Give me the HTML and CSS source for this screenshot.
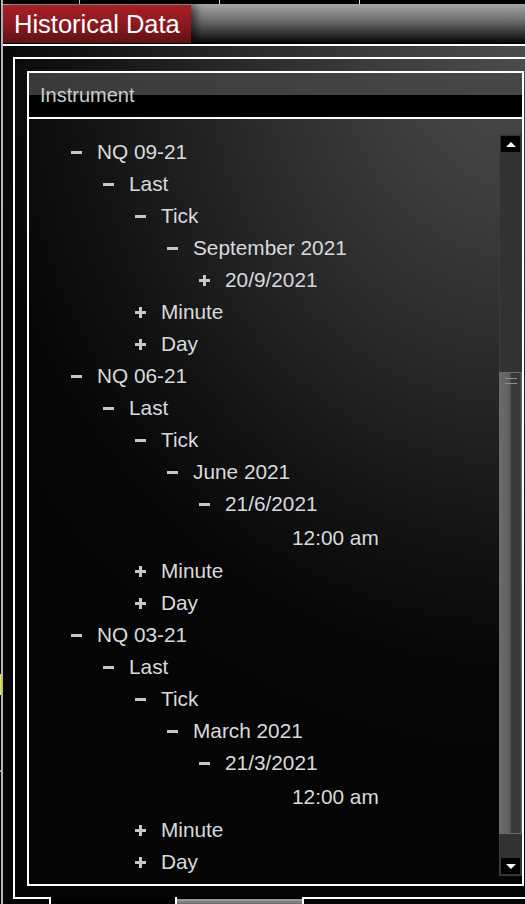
FILE: index.html
```html
<!DOCTYPE html>
<html>
<head>
<meta charset="utf-8">
<title>Historical Data</title>
<link rel="stylesheet" href="styles.css">
</head>
<body>
<div class="screen">
  <div class="edge"></div>
  <div class="frame">
    <div class="topstrip"></div>
    <div class="titlebar">
      <div class="tab">Historical Data</div>
    </div>
    <div class="body">
      <div class="panel">
        <div class="box">
          <div class="header">Instrument</div>
          <div class="list">
            <div class="tree">
              <div class="row l0"><span class="ico minus"></span><span class="lbl">NQ 09-21</span></div>
              <div class="row l1"><span class="ico minus"></span><span class="lbl">Last</span></div>
              <div class="row l2"><span class="ico minus"></span><span class="lbl">Tick</span></div>
              <div class="row l3"><span class="ico minus"></span><span class="lbl">September 2021</span></div>
              <div class="row l4"><span class="ico plus"></span><span class="lbl">20/9/2021</span></div>
              <div class="row l2"><span class="ico plus"></span><span class="lbl">Minute</span></div>
              <div class="row l2"><span class="ico plus"></span><span class="lbl">Day</span></div>
              <div class="row l0"><span class="ico minus"></span><span class="lbl">NQ 06-21</span></div>
              <div class="row l1"><span class="ico minus"></span><span class="lbl">Last</span></div>
              <div class="row l2"><span class="ico minus"></span><span class="lbl">Tick</span></div>
              <div class="row l3"><span class="ico minus"></span><span class="lbl">June 2021</span></div>
              <div class="row l4"><span class="ico minus"></span><span class="lbl">21/6/2021</span></div>
              <div class="row time"><span class="lbl">12:00 am</span></div>
              <div class="row l2"><span class="ico plus"></span><span class="lbl">Minute</span></div>
              <div class="row l2"><span class="ico plus"></span><span class="lbl">Day</span></div>
              <div class="row l0"><span class="ico minus"></span><span class="lbl">NQ 03-21</span></div>
              <div class="row l1"><span class="ico minus"></span><span class="lbl">Last</span></div>
              <div class="row l2"><span class="ico minus"></span><span class="lbl">Tick</span></div>
              <div class="row l3"><span class="ico minus"></span><span class="lbl">March 2021</span></div>
              <div class="row l4"><span class="ico minus"></span><span class="lbl">21/3/2021</span></div>
              <div class="row time"><span class="lbl">12:00 am</span></div>
              <div class="row l2"><span class="ico plus"></span><span class="lbl">Minute</span></div>
              <div class="row l2"><span class="ico plus"></span><span class="lbl">Day</span></div>
            </div>
            <div class="sb">
              <div class="sb-btn up"><span class="tri-up"></span></div>
              <div class="sb-track">
                <div class="sb-thumb"><i class="grip"></i><i class="grip"></i></div>
              </div>
              <div class="sb-btn down"><span class="tri-down"></span></div>
            </div>
          </div>
        </div>
      </div>
      <div class="tabs">
        <div class="t-seg"></div>
        <div class="t-active"></div>
        <div class="t-inactive"></div>
        <div class="t-rest"></div>
      </div>
    </div>
  </div>
</div>
</body>
</html>
```

FILE: styles.css
```css
html, body {
  margin: 0;
  padding: 0;
  background: #000;
  height: 904px;
  overflow: hidden;
}

body {
  font-family: "Liberation Sans", Arial, sans-serif;
}

.screen {
  display: flex;
  width: 525px;
  height: 904px;
}

.edge {
  width: 1px;
  flex: none;
  background: linear-gradient(to bottom,
    #000 0, #000 674px,
    #f2f200 674px, #f2f200 695px,
    #000 695px, #000 770px,
    #2ad0d8 770px, #2ad0d8 772px,
    #000 772px);
}

.frame {
  flex: 1;
  display: flex;
  flex-direction: column;
  border-left: 2px solid #b8b8b8;
  min-width: 0;
}

.topstrip {
  height: 4px;
  flex: none;
  background-color: #000;
  background-image: repeating-linear-gradient(to right, transparent 0, transparent 139px, #d8d8d8 139px, #d8d8d8 140px);
  background-position: -63px 0;
}

.titlebar {
  height: 40px;
  flex: none;
  display: flex;
  background: linear-gradient(to bottom, #a6a6a6 0%, #6e6e6e 40%, #1e1e1e 85%, #000 100%);
}

.tab {
  width: 188px;
  height: 38px;
  margin-top: 1px;
  padding-left: 11px;
  box-sizing: border-box;
  background: linear-gradient(to bottom, #a81e25 0%, #8c1a20 50%, #5e1216 100%);
  box-shadow: 5px 0 8px rgba(0, 0, 0, 0.55);
  color: #fff;
  font-size: 25.5px;
  line-height: 38px;
  white-space: nowrap;
}

.body {
  flex: 1;
  display: flex;
  flex-direction: column;
  border-top: 2px solid #fff;
  padding: 11px 0 0 10px;
  background-color: #050505;
  background-image: radial-gradient(ellipse 620px 700px at 100% 0%, #4c4c4c 0%, #3e3e3e 22%, #282828 48%, #121212 72%, #060606 90%, #050505 100%);
  min-height: 0;
}

.panel {
  border-top: 2px solid #fff;
  border-left: 2px solid #fff;
  padding: 12px 1px 11px 12px;
}

.box {
  border: 2px solid #fff;
  display: flex;
  flex-direction: column;
}

.header {
  height: 44px;
  line-height: 44px;
  padding-left: 11px;
  border-bottom: 2px solid #fff;
  color: #cdcdcd;
  font-size: 20px;
  background:
    linear-gradient(to bottom, rgba(0,0,0,0) 0, rgba(0,0,0,0) 50%, #000 50%, #000 100%),
    linear-gradient(to right, #3a3a3a, #474747);
}

.list {
  display: flex;
  height: 765px;
}

.tree {
  flex: 1;
  padding: 17px 0 6px 0;
  color: #d8dade;
  font-size: 20.8px;
}

.row {
  display: flex;
  align-items: center;
  height: 32px;
  white-space: nowrap;
}

.lbl {
  line-height: 32px;
}

.l0 { padding-left: 42px; }
.l1 { padding-left: 74px; }
.l2 { padding-left: 106px; }
.l3 { padding-left: 138px; }
.l4 { padding-left: 170px; }

.row.time {
  height: 35px;
  box-sizing: border-box;
  padding: 2px 0 1px 263px;
  align-items: flex-start;
}

.ico {
  flex: none;
  width: 11px;
  height: 11px;
  margin-right: 15px;
  position: relative;
}

.ico::before {
  content: "";
  position: absolute;
  left: 0;
  top: 4px;
  width: 11px;
  height: 3px;
  background: #c8c8c8;
}

.plus::after {
  content: "";
  position: absolute;
  left: 4px;
  top: 0;
  width: 3px;
  height: 11px;
  background: #c8c8c8;
}

.sb {
  flex: none;
  width: 23px;
  margin: 15px 0 8px 0;
  box-sizing: border-box;
  background: #323232;
  border: 1px solid #3c3c3c;
  display: flex;
  flex-direction: column;
}

.sb-btn {
  flex: none;
  height: 16px;
  margin: 1px 1px 0 1px;
  background: #000;
  display: flex;
  align-items: center;
  justify-content: center;
}

.sb-btn.down {
  margin: 0 1px 1px 1px;
}

.tri-up {
  width: 0;
  height: 0;
  border-left: 5px solid transparent;
  border-right: 5px solid transparent;
  border-bottom: 5px solid #fff;
}

.tri-down {
  width: 0;
  height: 0;
  border-left: 5px solid transparent;
  border-right: 5px solid transparent;
  border-top: 5px solid #fff;
}

.sb-track {
  flex: 1;
  display: flex;
  flex-direction: column;
}

.sb-thumb {
  margin: 220px -1px 0 -1px;
  height: 462px;
  box-sizing: border-box;
  border: 1px solid #6a6a6a;
  background: linear-gradient(to right, #6c6c6c 0%, #5c5c5c 48%, #3a3a3a 52%, #363636 92%, #4e4e4e 100%);
  display: flex;
  flex-direction: column;
  align-items: center;
  padding-top: 5px;
  gap: 4px;
}

.grip {
  display: block;
  width: 12px;
  height: 1px;
  background: #8e8e8e;
}

.tabs {
  height: 7px;
  flex: none;
  display: flex;
}

.t-seg {
  width: 36px;
  border-top: 2px solid #fff;
}

.t-active {
  width: 124px;
  border-left: 2px solid #fff;
  background: #000;
}

.t-inactive {
  width: 125px;
  border-left: 2px solid #fff;
  border-right: 2px solid #fff;
  background: linear-gradient(to bottom, #000 0, #000 2px, #a4a4a4 2px, #6a6a6a 100%);
}

.t-rest {
  flex: 1;
  border-top: 2px solid #fff;
}
```
